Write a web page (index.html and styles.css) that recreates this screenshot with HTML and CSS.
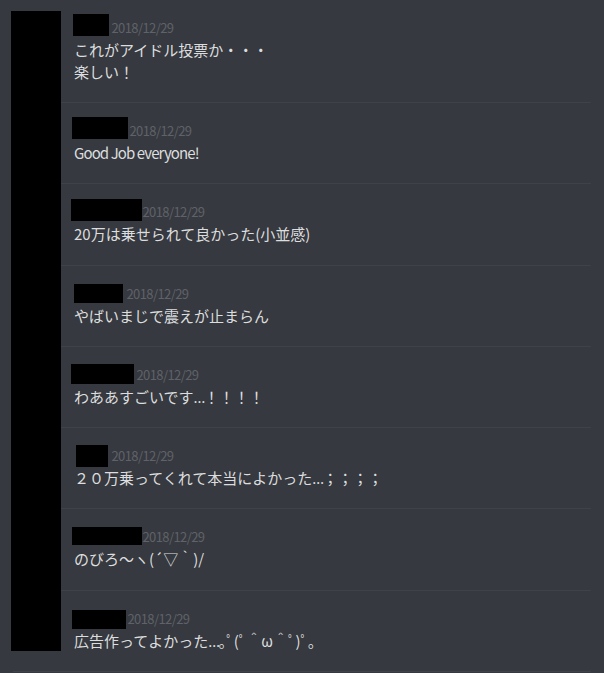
FILE: index.html
```html
<!DOCTYPE html>
<html lang="ja">
<head>
  <meta charset="UTF-8">
  <meta name="viewport" content="width=device-width, initial-scale=1.0">
  <title>chat log</title>
  <link rel="stylesheet" href="styles.css">
</head>
<body>
  <div class="chat">
    <!-- avatars hidden -->
    <div class="avatar-mask"></div>

    <div class="msg first">
      <div class="head"><span class="redact r1"></span><span class="time">2018/12/29</span></div>
      <div class="text">これがアイドル投票か・・・<br>楽しい！</div>
    </div>
    <div class="msg">
      <div class="head"><span class="redact r2"></span><span class="time">2018/12/29</span></div>
      <div class="text"><span class="latin">Good Job everyone!</span></div>
    </div>
    <div class="msg">
      <div class="head"><span class="redact r3"></span><span class="time">2018/12/29</span></div>
      <div class="text">20万は乗せられて良かった(小並感)</div>
    </div>
    <div class="msg">
      <div class="head"><span class="redact r4"></span><span class="time">2018/12/29</span></div>
      <div class="text">やばいまじで震えが止まらん</div>
    </div>
    <div class="msg">
      <div class="head"><span class="redact r5"></span><span class="time">2018/12/29</span></div>
      <div class="text">わああすごいです<span class="ell">…</span>！！！！</div>
    </div>
    <div class="msg">
      <div class="head"><span class="redact r6"></span><span class="time">2018/12/29</span></div>
      <div class="text">２０万乗ってくれて本当によかった<span class="ell">…</span>；；；；</div>
    </div>
    <div class="msg">
      <div class="head"><span class="redact r7"></span><span class="time">2018/12/29</span></div>
      <div class="text">のびろ〜ヽ(´▽｀)/</div>
    </div>
    <div class="msg">
      <div class="head"><span class="redact r8"></span><span class="time">2018/12/29</span></div>
      <div class="text">広告作ってよかった<span class="ell">…</span>｡ﾟ(ﾟ＾ω＾ﾟ)ﾟ｡</div>
    </div>
  </div>
</body>
</html>
```

FILE: styles.css
```css
html, body {
  margin: 0;
  background-color: #36393f;
}
body {
  font-family: "Noto Sans CJK JP", "Noto Sans", sans-serif;
  overflow: hidden;
}
.chat {
  position: relative;
  margin: 0 13px;
}
.avatar-mask {
  position: absolute;
  left: -2px;
  top: 11px;
  width: 50px;
  height: 640px;
  background-color: #000;
}
.msg {
  padding: 12px 0 19.29px 61px;
  border-bottom: 1px solid #3f4248;
}
.msg.first {
  padding-top: 11.7px;
}
.head {
  display: flex;
  align-items: flex-end;
  height: 22px;
}
.time {
  font-size: 13px;
  line-height: 1;
  letter-spacing: -0.6px;
  color: #5f6268;
}
.text {
  margin-top: 5px;
  font-size: 15px;
  line-height: 22px;
  color: #dcddde;
}
.latin {
  letter-spacing: -0.9px;
}
.ell {
  font-family: "Noto Sans", sans-serif;
  letter-spacing: -1.5px;
}

/* name redactions */
.redact {
  display: block;
  flex: none;
  background-color: #000;
}
.r1 { width: 36px; height: 22px; margin: 0 2.5px -2px -1px; }
.r2 { width: 56px; height: 22px; margin: 0 1.5px -2px -2px; }
.r3 { width: 71px; height: 22px; margin: 0 0.5px -3px -3px; }
.r4 { width: 49px; height: 19px; margin: 0 3.5px -3px 0; }
.r5 { width: 63px; height: 20px; margin: 0 2.5px -3px -3px; }
.r6 { width: 32px; height: 22px; margin: 0 3.5px -5px 2px; }
.r7 { width: 70px; height: 18px; margin: 0 0.5px -2px -2px; }
.r8 { width: 54px; height: 19px; margin: 0 1.5px -4px -2px; }
```
